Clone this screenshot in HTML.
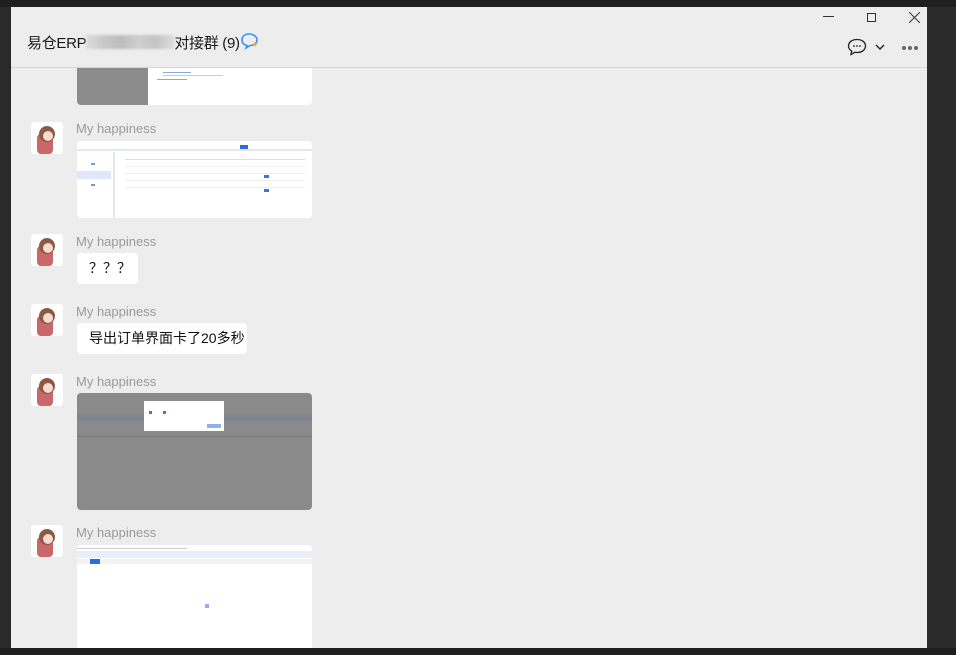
<!DOCTYPE html>
<html><head><meta charset="utf-8"><style>
*{margin:0;padding:0;box-sizing:border-box}
body{width:956px;height:655px;background:#1f1f1f;position:relative;overflow:hidden;font-family:"Liberation Sans","Noto Sans CJK SC",sans-serif}
.abs{position:absolute}
#main{left:11px;top:7px;width:916px;height:641px;background:#ededed;overflow:hidden}
#right{left:927px;top:7px;width:29px;height:641px;background:#2b2b2b}
#left{left:0;top:7px;width:11px;height:641px;background:#2a2a2a}
.title{left:16px;top:25px;font-size:15px;color:#1a1a1a;white-space:nowrap;letter-spacing:-0.3px}
.hr{left:0;top:60px;width:916px;height:1px;background:#d6d6d6}
.av{width:32px;height:32px;background:#fff;border-radius:3px;overflow:hidden}
.name{font-size:13px;color:#9a9a9a}
.img{background:#fff;border-radius:4px;overflow:hidden}
.bub{background:#fff;border-radius:4px;font-size:14px;color:#111;padding:0 12px;height:31px;line-height:31px;white-space:nowrap}
.ln{position:absolute;height:2px;background:#d8d8d8}
</style></head><body>
<div class="abs" id="left"></div>
<div class="abs" id="right"></div>
<div class="abs" id="main">
  <div class="abs title">易仓ERP<span style="display:inline-block;width:88px;height:14px;background:linear-gradient(90deg,#ddd,#c9c9c9,#bdbdbd,#cfcfcf,#c4c4c4,#ddd);vertical-align:-1px;filter:blur(1px)"></span>对接群 (9)</div>
  <svg class="abs" style="left:229px;top:25px" width="20" height="18" viewBox="0 0 20 18"><path d="M9 2C4.5 2 2 4.5 2 8c0 3 2 5 5 5.5L6 16l4-2.5c4 0 7-2.5 7-5.5S14 2 9 2z" fill="none" stroke="#3b8ff0" stroke-width="1.6"/><path d="M15 10l.8 1.6 1.6.8-1.6.8L15 15l-.8-1.8-1.6-.8 1.6-.8z" fill="#f5a623"/></svg>
  <div class="abs" style="left:812px;top:9px;width:11px;height:1px;background:#333"></div>
  <div class="abs" style="left:856px;top:6px;width:9px;height:9px;border:1px solid #333"></div>
  <svg class="abs" style="left:898px;top:5px" width="11" height="11"><path d="M0 0L11 11M11 0L0 11" stroke="#333" stroke-width="1"/></svg>
  <svg class="abs" style="left:836px;top:31px" width="20" height="18" viewBox="0 0 20 18"><path d="M10 1.5C5 1.5 1.5 4.2 1.5 8c0 2.3 1.3 4 3.2 5L4 16.5l3.8-2.2c.7.2 1.4.2 2.2.2 5 0 8.5-2.7 8.5-6.5S15 1.5 10 1.5z" fill="none" stroke="#222" stroke-width="1.3"/><circle cx="7" cy="8" r=".9" fill="#222"/><circle cx="10" cy="8" r=".9" fill="#222"/><circle cx="13" cy="8" r=".9" fill="#222"/></svg>
  <svg class="abs" style="left:864px;top:37px" width="10" height="7"><path d="M1 1l4 4 4-4" fill="none" stroke="#222" stroke-width="1.4"/></svg>
  <div class="abs" style="left:891px;top:39px;font-size:0">
    <span style="display:inline-block;width:4px;height:4px;border-radius:2px;background:#666;margin-right:2px"></span><span style="display:inline-block;width:4px;height:4px;border-radius:2px;background:#666;margin-right:2px"></span><span style="display:inline-block;width:4px;height:4px;border-radius:2px;background:#666"></span>
  </div>
  <div class="abs hr"></div>

  <div class="abs" style="left:0;top:61px;width:916px;height:580px;overflow:hidden">
    <div class="abs img" style="left:66px;top:-40px;width:235px;height:77px">
      <div class="abs" style="left:0;top:0;width:71px;height:77px;background:#8c8c8c"></div>
      <div class="ln" style="left:86px;top:44px;width:28px;height:1px;background:#8aa8e8"></div>
      <div class="ln" style="left:86px;top:47px;width:60px;height:1px;background:#ccc"></div>
      <div class="ln" style="left:80px;top:51px;width:30px;height:1px;background:#8aa8e8"></div>
    </div>

    <div class="abs av" style="left:20px;top:54px"><svg width="32" height="32"><rect x="6" y="12" width="16" height="20" rx="4" fill="#c9676a"/><circle cx="16" cy="12" r="8" fill="#8a5a44"/><circle cx="17" cy="14" r="5" fill="#f6dcd0"/></svg></div>
    <div class="abs name" style="left:65px;top:53px">My happiness</div>
    <div class="abs img" style="left:66px;top:73px;width:235px;height:77px">
      <div class="abs" style="left:0;top:8px;width:235px;height:2px;background:#e4e8ee"></div>
      <div class="abs" style="left:36px;top:11px;width:2px;height:66px;background:#e4e8ee"></div>
      <div class="abs" style="left:163px;top:4px;width:8px;height:4px;background:#2b6de0"></div>
      <div class="abs" style="left:14px;top:22px;width:4px;height:2px;background:#6f9ae8"></div>
      <div class="abs" style="left:0;top:30px;width:34px;height:8px;background:#dfe8fa"></div>
      <div class="abs" style="left:14px;top:43px;width:4px;height:2px;background:#6f9ae8"></div>
      <div class="ln" style="left:48px;top:18px;width:180px;height:1px;background:#ddd"></div>
      <div class="ln" style="left:48px;top:25px;width:180px;height:1px;background:#eee"></div>
      <div class="ln" style="left:48px;top:32px;width:180px;height:1px;background:#eee"></div>
      <div class="ln" style="left:48px;top:39px;width:180px;height:1px;background:#eee"></div>
      <div class="ln" style="left:48px;top:46px;width:180px;height:1px;background:#eee"></div>
      <div class="abs" style="left:187px;top:34px;width:5px;height:3px;background:#3e74e0"></div>
      <div class="abs" style="left:187px;top:48px;width:5px;height:3px;background:#3e74e0"></div>
    </div>

    <div class="abs av" style="left:20px;top:166px"><svg width="32" height="32"><rect x="6" y="12" width="16" height="20" rx="4" fill="#c9676a"/><circle cx="16" cy="12" r="8" fill="#8a5a44"/><circle cx="17" cy="14" r="5" fill="#f6dcd0"/></svg></div>
    <div class="abs name" style="left:65px;top:166px">My happiness</div>
    <div class="abs bub" style="left:66px;top:185px;width:61px">？？？</div>

    <div class="abs av" style="left:20px;top:236px"><svg width="32" height="32"><rect x="6" y="12" width="16" height="20" rx="4" fill="#c9676a"/><circle cx="16" cy="12" r="8" fill="#8a5a44"/><circle cx="17" cy="14" r="5" fill="#f6dcd0"/></svg></div>
    <div class="abs name" style="left:65px;top:236px">My happiness</div>
    <div class="abs bub" style="left:66px;top:255px;width:170px">导出订单界面卡了20多秒</div>

    <div class="abs av" style="left:20px;top:306px"><svg width="32" height="32"><rect x="6" y="12" width="16" height="20" rx="4" fill="#c9676a"/><circle cx="16" cy="12" r="8" fill="#8a5a44"/><circle cx="17" cy="14" r="5" fill="#f6dcd0"/></svg></div>
    <div class="abs name" style="left:65px;top:306px">My happiness</div>
    <div class="abs img" style="left:66px;top:325px;width:235px;height:117px;background:#8a8a8a">
      <div class="abs" style="left:0;top:22px;width:235px;height:6px;background:#7f8590"></div>
      <div class="ln" style="left:0;top:43px;width:235px;height:1px;background:#7a7a7a"></div>
      <div class="abs" style="left:67px;top:8px;width:80px;height:30px;background:#fff"></div>
      <div class="abs" style="left:72px;top:18px;width:3px;height:3px;background:#3e74e0"></div>
      <div class="abs" style="left:86px;top:18px;width:3px;height:3px;background:#3e74e0"></div>
      <div class="abs" style="left:130px;top:31px;width:14px;height:4px;background:#8fb0f0"></div>
    </div>

    <div class="abs av" style="left:20px;top:457px"><svg width="32" height="32"><rect x="6" y="12" width="16" height="20" rx="4" fill="#c9676a"/><circle cx="16" cy="12" r="8" fill="#8a5a44"/><circle cx="17" cy="14" r="5" fill="#f6dcd0"/></svg></div>
    <div class="abs name" style="left:65px;top:457px">My happiness</div>
    <div class="abs img" style="left:66px;top:477px;width:235px;height:110px">
      <div class="abs" style="left:0;top:6px;width:235px;height:7px;background:#e8eefa"></div>
      <div class="abs" style="left:0;top:14px;width:235px;height:5px;background:#f3f3f3"></div>
      <div class="abs" style="left:13px;top:14px;width:10px;height:5px;background:#2b6de0"></div>
      <div class="ln" style="left:0;top:3px;width:110px;height:1px;background:#ccc"></div>
      <div class="abs" style="left:128px;top:59px;width:4px;height:4px;background:#8fb0f0"></div>
    </div>
  </div>
</div>
</body></html>
